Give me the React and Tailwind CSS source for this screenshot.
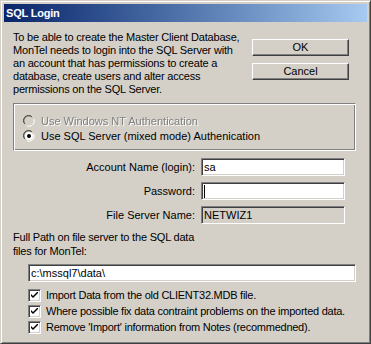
import React from 'react';

const FONT = { fontFamily: '"Liberation Sans", Arial, sans-serif' };

const sunken = 'border border-t-[#808080] border-l-[#808080] border-b-white border-r-white shadow-[inset_1px_1px_0_#404040,inset_-1px_-1px_0_#d4d0c8]';
const raised = 'border border-t-white border-l-white border-b-[#404040] border-r-[#404040] shadow-[inset_-1px_-1px_0_#808080,inset_1px_1px_0_#d4d0c8]';

function Radio({ checked, disabled, children }) {
  return (
    <div className={`flex items-center gap-[6px] h-[14px] ${disabled ? 'text-[#808080]' : 'text-black'}`}>
      <svg width="12" height="12" viewBox="0 0 12 12" className="shrink-0">
        <path d="M1 8 A5.5 5.5 0 0 1 8 1" fill="none" stroke="#808080" />
        <path d="M2 9 A4.5 4.5 0 0 1 9 2" fill="none" stroke="#404040" />
        <circle cx="6" cy="6" r="4" fill={disabled ? '#d4d0c8' : '#fff'} />
        <path d="M4 11 A5.5 5.5 0 0 0 11 4" fill="none" stroke="#fff" />
        {checked && <circle cx="6" cy="6" r="2" fill="#000" />}
      </svg>
      <span className={`whitespace-nowrap ${disabled ? 'drop-shadow-[1px_1px_0_#fff]' : ''}`}>{children}</span>
    </div>
  );
}

function Check({ children }) {
  return (
    <div className="flex items-center gap-[5px] h-[15px]">
      <div className={`w-[13px] h-[13px] bg-white shrink-0 ${sunken} flex items-center justify-center`}>
        <svg width="7" height="7" viewBox="0 0 7 7">
          <path d="M0 2 L0 4 L2 6 L7 1 L7 -1 L2 4 Z" fill="#000" />
        </svg>
      </div>
      <span className="whitespace-nowrap tracking-[-0.25px]">{children}</span>
    </div>
  );
}

function Field({ label, value, disabled, caret }) {
  return (
    <div className="flex items-center h-[18px]">
      <span className="w-[188px] text-right pr-[6px]">{label}</span>
      <div className={`w-[144px] h-[18px] ${disabled ? 'bg-[#d4d0c8]' : 'bg-white'} ${sunken} flex items-center px-[2px]`}>
        {caret && <span className="w-px h-[13px] bg-black" />}
        {value}
      </div>
    </div>
  );
}

export default function App() {
  return (
    <div
      style={FONT}
      className="w-[371px] h-[344px] bg-[#d4d0c8] text-[11px] text-black leading-[13px] p-[3px] flex flex-col border border-t-[#d4d0c8] border-l-[#d4d0c8] border-b-[#404040] border-r-[#404040] shadow-[inset_1px_1px_0_#fff,inset_-1px_-1px_0_#808080]"
    >
      {/* Title bar */}
      <div className="h-[18px] bg-gradient-to-r from-[#0a246a] to-[#a6caf0] flex items-center px-[2px]">
        <span className="text-white font-bold text-[11px] tracking-[-0.2px]">SQL Login</span>
      </div>

      <div className="flex flex-col pl-[9px] pr-[11px]">
        {/* Intro + buttons */}
        <div className="flex mt-[9px]">
          <p className="w-[238px] tracking-[-0.2px]">
            To be able to create the Master Client Database,<br />
            MonTel needs to login into the SQL Server with<br />
            an account that has permissions to create a<br />
            database, create users and alter access<br />
            permissions on the SQL Server.
          </p>
          <div className="flex flex-col gap-[7px] ml-[1px] mt-[8px]">
            <button className={`w-[97px] h-[17px] bg-[#d4d0c8] ${raised} text-[11px] leading-none`}>OK</button>
            <button className={`w-[97px] h-[17px] bg-[#d4d0c8] ${raised} text-[11px] leading-none`}>Cancel</button>
          </div>
        </div>

        {/* Group box */}
        <div className="mt-[7px] w-[343px] h-[48px] border border-t-[#808080] border-l-[#808080] border-b-white border-r-white shadow-[inset_1px_1px_0_#fff,inset_-1px_-1px_0_#808080] flex flex-col pl-[9px] pt-[10px] gap-[1px]">
          <Radio disabled>Use Windows NT Authentication</Radio>
          <Radio checked>Use SQL Server (mixed mode) Authenication</Radio>
        </div>

        {/* Fields */}
        <div className="flex flex-col gap-[6px] mt-[7px]">
          <Field label="Account Name (login):" value="sa" />
          <Field label="Password:" caret />
          <Field label="File Server Name:" value="NETWIZ1" disabled />
        </div>

        <p className="mt-[6px] tracking-[-0.2px] leading-[14px]">
          Full Path on file server to the SQL data<br />
          files for MonTel:
        </p>

        <div className="pl-[15px] mt-[6px]">
          <div className={`w-[328px] h-[18px] bg-white ${sunken} flex items-center px-[2px]`}>c:\mssql7\data\</div>
        </div>

        <div className="pl-[15px] mt-[6px] flex flex-col gap-[1px]">
          <Check>Import Data from the old CLIENT32.MDB file.</Check>
          <Check>Where possible fix data contraint problems on the imported data.</Check>
          <Check>Remove 'Import' information from Notes (recommedned).</Check>
        </div>
      </div>
    </div>
  );
}
